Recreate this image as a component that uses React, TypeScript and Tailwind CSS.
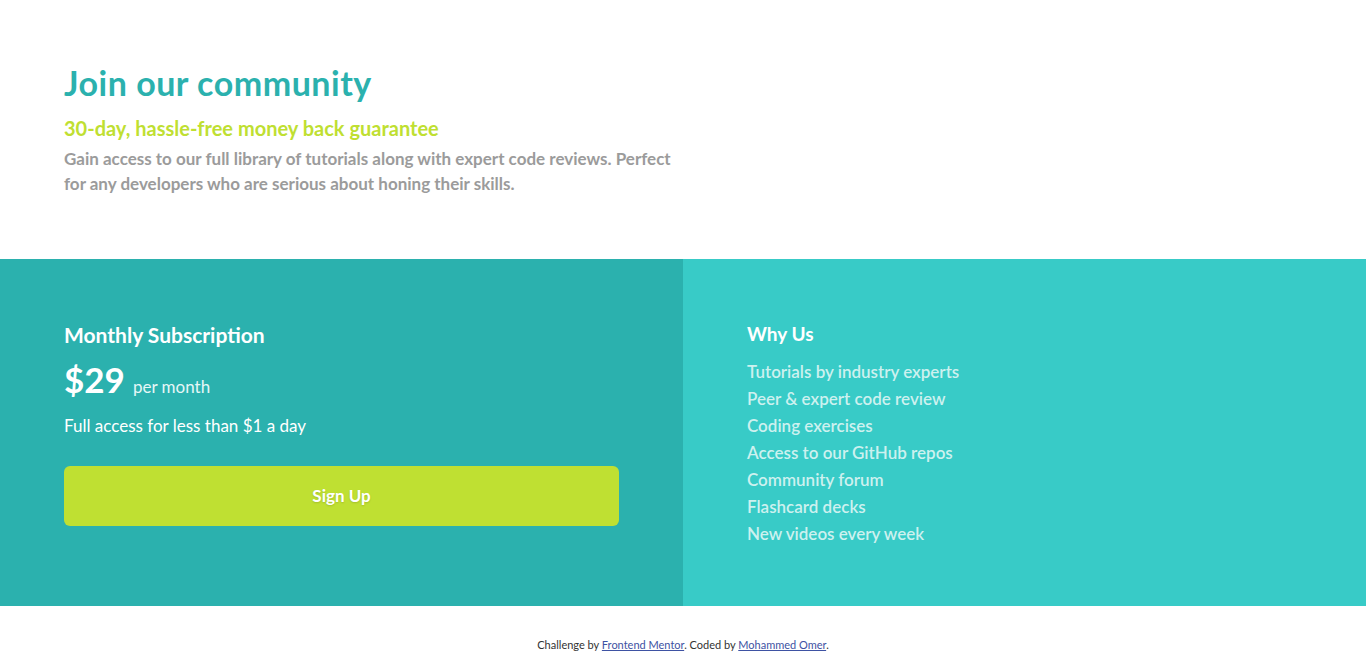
const features = [
  'Tutorials by industry experts',
  'Peer & expert code review',
  'Coding exercises',
  'Access to our GitHub repos',
  'Community forum',
  'Flashcard decks',
  'New videos every week',
];

const App = () => {
  return (
    <div className="min-h-screen bg-white font-['Lato','Open_Sans',sans-serif]">
      <section className="px-16 pt-[62px] pb-[63px]">
        <h1 className="text-[34px] leading-[42px] font-bold tracking-[0.5px] text-[#2bb1ae]">Join our community</h1>
        <h2 className="mt-[12px] text-[20px] leading-[24px] font-bold text-[#bfdf32]">
          30-day, hassle-free money back guarantee
        </h2>
        <p className="mt-[6px] max-w-[620px] text-[17px] leading-[25px] font-bold text-[#9b9b9b]">
          Gain access to our full library of tutorials along with expert code reviews. Perfect for any developers who are
          serious about honing their skills.
        </p>
      </section>

      <section className="grid grid-cols-2 h-[347px]">
        <div className="bg-[#2bb1ae] pl-16 pr-16 pt-[64px]">
          <h3 className="text-[21px] leading-[24px] font-bold text-white">Monthly Subscription</h3>
          <div className="mt-[12px] flex items-baseline gap-2">
            <span className="text-[35px] leading-[40px] font-bold text-white">$29</span>
            <span className="text-[17px] text-[#e6f7f7]">per month</span>
          </div>
          <p className="mt-[15px] text-[17px] leading-[22px] text-white">Full access for less than $1 a day</p>
          <button className="mt-[29px] h-[60px] w-[555px] rounded-md bg-[#bfe032] text-[17px] font-bold text-white [text-shadow:0_1px_2px_rgba(0,0,0,0.15)]">
            Sign Up
          </button>
        </div>
        <div className="bg-[#38cbc7] pl-16 pt-[63px]">
          <h3 className="text-[19px] leading-[24px] font-bold text-white">Why Us</h3>
          <ul className="mt-[12px] flex flex-col">
            {features.map((f) => (
              <li key={f} className="text-[17px] leading-[27px] font-semibold text-[#cdf1ef]">
                {f}
              </li>
            ))}
          </ul>
        </div>
      </section>

      <footer className="pt-[31px] text-center text-[11px] text-[#333333]">
        Challenge by{' '}
        <a href="#" className="text-[#3e52a3] underline">
          Frontend Mentor
        </a>
        . Coded by{' '}
        <a href="#" className="text-[#3e52a3] underline">
          Mohammed Omer
        </a>
        .
      </footer>
    </div>
  );
};

export default App;
